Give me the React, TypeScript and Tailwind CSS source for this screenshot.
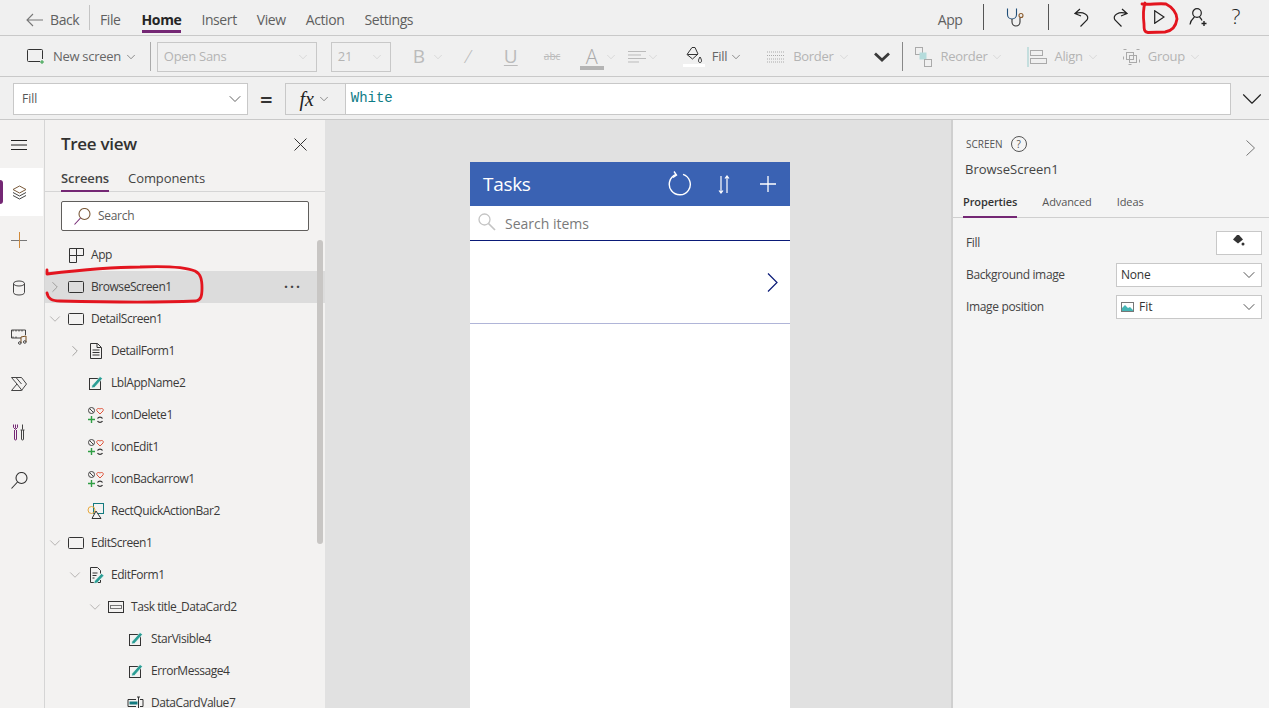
import { ReactNode } from 'react';
import { ChevronDown, ChevronRight } from 'lucide-react';

const font = "font-['Open_Sans','Liberation_Sans',sans-serif]";

const Chev = ({ className = 'text-[#666]', size = 14 }: { className?: string; size?: number }) => (
  <ChevronDown size={size} strokeWidth={1.1} className={className} />
);

const Svg = ({ w = 18, h = 18, children, className }: { w?: number; h?: number; children: ReactNode; className?: string }) => (
  <svg width={w} height={h} viewBox={`0 0 ${w} ${h}`} fill="none" stroke="#444" strokeWidth="1" className={className}>
    {children}
  </svg>
);

const Pencil = ({ x = 0, y = 0 }: { x?: number; y?: number }) => (
  <path transform={`translate(${x} ${y})`} d="M2 12 L10 3 L12.5 5 L4.5 14 L1.5 14.5 Z" fill="#2a9d94" stroke="#fff" strokeWidth="0.6" />
);

// magnifier with the handle on the lower left, as in the rail and the tree search
const Loupe = ({ handle = '#333', ring = '#333', className }: { handle?: string; ring?: string; className?: string }) => (
  <svg width="17" height="17" viewBox="0 0 17 17" fill="none" strokeWidth="1.100" className={className}>
    <circle cx="10.500" cy="6" r="5.500" stroke={ring} />
    <path d="M6.500 10 L0.500 16.500" stroke={handle} />
  </svg>
);

const treeIcons: Record<string, ReactNode> = {
  app: (
    <Svg>
      <path d="M2.500 2.500h14v7h-7v7h-7z M9.500 2.500v7 M2.500 9.500h7" stroke="#333" />
    </Svg>
  ),
  screen: (
    <Svg>
      <rect x="1.500" y="3.500" width="15" height="11" rx="1" stroke="#333" />
    </Svg>
  ),
  form: (
    <Svg>
      <path d="M3.500 1.500h7l4 4v11h-11z M5.500 8h7 M5.500 10.500h7 M5.500 13h7 M10 1.500v4h4" stroke="#333" />
    </Svg>
  ),
  label: (
    <Svg>
      <rect x="2.500" y="4.500" width="11" height="11" stroke="#333" />
      <Pencil x={3} y={-0.500} />
    </Svg>
  ),
  multi: (
    <Svg>
      <circle cx="4.500" cy="4.500" r="3" stroke="#444" />
      <path d="M2.500 2.500l4 4" stroke="#444" />
      <path d="M13 8 L10 5 C9 3.500 10.500 1.500 13 3 C15.500 1.500 17 3.500 16 5 Z" stroke="#e0533a" />
      <path d="M1 13.500h7 M4.500 10v7" stroke="#2f9e44" strokeWidth="1.400" />
      <path d="M10.500 12.500a3 3 0 0 1 5 0 M15.500 15a3 3 0 0 1-5 0" stroke="#333" strokeWidth="1.300" />
    </Svg>
  ),
  shapes: (
    <Svg>
      <rect x="6.500" y="1.500" width="10" height="10" stroke="#137a7f" />
      <circle cx="4.500" cy="8" r="3.500" stroke="#e7a83c" />
      <path d="M9 9 L14 16.500 H5 Z" fill="#f3f2f1" stroke="#333" />
    </Svg>
  ),
  edit: (
    <Svg>
      <path d="M3.500 1.500h7l3 3v3 M13.500 14v2.500h-10v-15 M5.500 7h5 M5.500 9.500h4 M5.500 12h2" stroke="#333" />
      <path d="M7.500 15 L14.500 7.500 L17 9.500 L10 17 L7 17.500 Z" fill="#2a9d94" stroke="#fff" strokeWidth="0.600" />
    </Svg>
  ),
  card: (
    <Svg>
      <rect x="1.500" y="3.500" width="15" height="11" stroke="#333" />
      <rect x="3.500" y="7.500" width="11" height="3" stroke="#777" />
    </Svg>
  ),
  input: (
    <Svg>
      <path d="M9 5.500h-8v7h8 M13 5.500h3v7h-3" stroke="#333" />
      <rect x="2.500" y="7.500" width="8" height="3" fill="#137a7f" stroke="none" />
      <path d="M10 3h3 M10 15h3 M11.500 3v12" stroke="#333" />
    </Svg>
  ),
};

type Row = { name: string; level: number; icon: string; arrow?: 'down' | 'right'; active?: boolean };

const rows: Row[] = [
  { name: 'App', level: 0, icon: 'app' },
  { name: 'BrowseScreen1', level: 0, icon: 'screen', arrow: 'right', active: true },
  { name: 'DetailScreen1', level: 0, icon: 'screen', arrow: 'down' },
  { name: 'DetailForm1', level: 1, icon: 'form', arrow: 'right' },
  { name: 'LblAppName2', level: 1, icon: 'label' },
  { name: 'IconDelete1', level: 1, icon: 'multi' },
  { name: 'IconEdit1', level: 1, icon: 'multi' },
  { name: 'IconBackarrow1', level: 1, icon: 'multi' },
  { name: 'RectQuickActionBar2', level: 1, icon: 'shapes' },
  { name: 'EditScreen1', level: 0, icon: 'screen', arrow: 'down' },
  { name: 'EditForm1', level: 1, icon: 'edit', arrow: 'down' },
  { name: 'Task title_DataCard2', level: 2, icon: 'card', arrow: 'down' },
  { name: 'StarVisible4', level: 3, icon: 'label' },
  { name: 'ErrorMessage4', level: 3, icon: 'label' },
  { name: 'DataCardValue7', level: 3, icon: 'input' },
];

const indent = ['pl-[3px]', 'pl-[23px]', 'pl-[43px]', 'pl-[63px]'];

const TreeRow = ({ row }: { row: Row }) => (
  <div className={`flex h-[32px] shrink-0 items-center ${indent[row.level]} ${row.active ? 'bg-[#dcdcdc]' : ''}`}>
    <span className="flex w-[14px] justify-center">
      {row.arrow === 'down' && <ChevronDown size={18} strokeWidth={1} className="shrink-0 text-[#a19f9d]" />}
      {row.arrow === 'right' && <ChevronRight size={18} strokeWidth={1} className="shrink-0 text-[#8a8886]" />}
    </span>
    <span className="flex w-[29px] pl-[5px]">{treeIcons[row.icon]}</span>
    <span className="text-[12px] leading-none tracking-[-0.45px] text-[#3b3a39]">{row.name}</span>
    {row.active && <span className="-mt-[9px] ml-auto mr-[23px] text-[14px] font-bold leading-none tracking-[2px] text-[#444]">...</span>}
  </div>
);

const railIcons: ReactNode[] = [
  <Svg key="data">
    <ellipse cx="9" cy="4.500" rx="5.500" ry="2.500" />
    <path d="M3.500 4.500v9c0 1.500 2.500 2.500 5.500 2.500s5.500-1 5.500-2.500v-9" />
  </Svg>,
  <Svg key="media">
    <path d="M11 11h-9.500v-8h14v5 M3 3v1.500 M6 3v1.500 M9 3v1.500 M12 3v1.500 M3 9.500v1.500 M6 9.500v1.500" />
    <path d="M11 16v-6l5-1v6" stroke="#7a4f1f" />
    <circle cx="9.800" cy="16" r="1.300" />
    <circle cx="14.800" cy="15" r="1.300" />
  </Svg>,
  <Svg key="flow">
    <path d="M1.500 2.500h10l5 6.500-5 6.500h-10l5.500-6.500z M7 9l5 6.500 M6 2.500l5.500 6.500" />
  </Svg>,
  <Svg key="tools">
    <path d="M5.500 1.500v4 M3.500 1.500v3l2 2 2-2v-3 M4.500 7v9a1 1 0 0 0 2 0v-9" stroke="#742774" />
    <path d="M12.500 1.500v5 M10.500 7h4 M11.500 7v9a1 1 0 0 0 2 0v-9" />
  </Svg>,
];

const SelectBox = ({ className, children }: { className: string; children: ReactNode }) => (
  <div className={`flex items-center justify-between border border-[#c8c8c8] ${className}`}>{children}</div>
);

const Ghost = ({ children, className = '' }: { children: ReactNode; className?: string }) => (
  <span className={`text-[13px] tracking-[-0.3px] text-[#b4b4b4] ${className}`}>{children}</span>
);

const TopBar = () => (
  <div className="flex h-[36px] shrink-0 items-center border-b border-[#c9c9c9] pl-[26px] pt-[4px] text-[14px] tracking-[-0.4px] text-[#5f5f5f]">
    <svg width="17" height="14" viewBox="0 0 17 14" fill="none" stroke="#777" strokeWidth="1.100">
      <path d="M7 1 L1 7 L7 13 M1 7 H17" />
    </svg>
    <span className="ml-[7px] w-[39px]">Back</span>
    <span className="-mt-[5px] h-[25px] w-px bg-[#c4c4c4]" />
    <span className="ml-[10px]">File</span>
    <span className="relative ml-[21px] flex h-full items-center font-bold text-[#252525]">
      Home
      <span className="absolute bottom-[2px] left-0 right-0 h-[3px] bg-[#742774]" />
    </span>
    <span className="ml-[20px]">Insert</span>
    <span className="ml-[20px]">View</span>
    <span className="ml-[20px]">Action</span>
    <span className="ml-[20px]">Settings</span>
    <span className="ml-auto">App</span>
    <span className="-mt-[5px] ml-[20px] h-[26px] w-px bg-[#555]" />
    <svg className="-mt-[5px] ml-[22px]" width="19" height="19" viewBox="0 0 19 19" fill="none" stroke="#1f4e79" strokeWidth="1.100">
      <path d="M1.500 0.500v6a4.500 4.500 0 0 0 9 0v-6" />
      <path d="M6 11v3a4 4 0 0 0 8 0v-4" stroke="#333" />
      <circle cx="15" cy="7.500" r="2" stroke="#8a5a2b" />
    </svg>
    <span className="-mt-[5px] ml-[23px] h-[26px] w-px bg-[#555]" />
    <svg className="-mt-[5px] ml-[25px]" width="15" height="19" viewBox="0 0 15 19" fill="none" stroke="#222" strokeWidth="1.200">
      <path d="M6 1 L1 5.500 L7 8 M1.500 5.500 C9 3 16 7 13 12 L6.500 18.500" />
    </svg>
    <svg className="-mt-[5px] ml-[24px]" width="15" height="19" viewBox="0 0 15 19" fill="none" stroke="#222" strokeWidth="1.200">
      <path d="M9 1 L14 5.500 L8 8 M13.500 5.500 C6 3 -1 7 2 12 L8.500 18.500" />
    </svg>
    <svg className="-mt-[5px] ml-[26px]" width="11" height="14" viewBox="0 0 11 14" fill="none" stroke="#222" strokeWidth="1.200">
      <path d="M0.700 0.700 L10 7 L0.700 13.300 Z" />
    </svg>
    <svg className="-mt-[5px] ml-[24px]" width="19" height="18" viewBox="0 0 19 18" fill="none" stroke="#222" strokeWidth="1.200">
      <circle cx="8" cy="5" r="4.300" />
      <path d="M1 16.500 C1.500 12 4 10.500 5.500 9 M10.500 9 C11.500 10 12.500 11 13 12.500" />
      <path d="M15 13v5 M12.500 15.500h5" strokeWidth="1.400" />
    </svg>
    <span className="-mt-[6px] ml-[24px] mr-[29px] text-[21px] font-light leading-none text-[#222]">?</span>
  </div>
);

const Ribbon = () => (
  <div className="flex h-[41px] shrink-0 items-center border-b border-[#c9c9c9] pl-[27px] pt-[1px] text-[13px]">
    <svg width="17" height="15" viewBox="0 0 17 15" fill="none" stroke="#333" strokeWidth="1">
      <path d="M13 12.500H1.500a1 1 0 0 1-1-1V1.500a1 1 0 0 1 1-1h13a1 1 0 0 1 1 1V10" />
      <path d="M15 11v4 M13 13h4" stroke="#2f9e44" />
    </svg>
    <span className="ml-[9px] whitespace-nowrap tracking-[-0.3px] text-[#666]">New screen</span>
    <Chev className="ml-[3px] text-[#555]" />
    <span className="ml-[12px] h-[29px] w-px bg-[#aaa]" />
    <SelectBox className="ml-[6px] h-[30px] w-[160px] px-[6px]">
      <Ghost className="text-[#aaa]">Open Sans</Ghost>
      <Chev className="text-[#ccc]" />
    </SelectBox>
    <SelectBox className="ml-[14px] h-[30px] w-[60px] px-[6px]">
      <Ghost className="text-[#aaa]">21</Ghost>
      <Chev className="text-[#ccc]" />
    </SelectBox>
    <span className="ml-[22px] w-[18px] text-[19px] text-[#bbb]">B</span>
    <Chev className="text-[#ccc]" />
    <span className="ml-[20px] w-[22px] text-[19px] font-light italic text-[#bbb]">/</span>
    <span className="ml-[17px] w-[16px] text-[19px] text-[#bbb] underline decoration-1 underline-offset-2">U</span>
    <span className="ml-[24px] w-[20px] text-[10px] text-[#bbb] line-through">abc</span>
    <span className="relative ml-[16px] w-[24px] text-center text-[20px] font-light text-[#aaa]">
      A
      <span className="absolute bottom-[2px] left-0 right-0 h-[4px] bg-[#b4b4b4]" />
    </span>
    <Chev className="text-[#ccc]" />
    <svg className="ml-[10px]" width="18" height="14" viewBox="0 0 18 14" stroke="#bbb" strokeWidth="1">
      <path d="M0 1.500h18 M0 5h13 M0 8.500h18 M0 12h11" />
    </svg>
    <Chev className="text-[#ccc]" />
    <span className="relative ml-[23px] h-[20px] w-[22px]">
      <svg className="ml-[3px]" width="17" height="17" viewBox="0 0 17 17" fill="none" stroke="#333" strokeWidth="1">
        <path d="M6 0.500 L9 0.500 L12 7 L6.500 12 L1 7.500 Z M1.500 7.500h10" />
        <path d="M14 10c-2 3-2 5.500 0 5.500s2-2.500 0-5.500z" />
      </svg>
      <span className="absolute bottom-0 left-0 h-[3px] w-[22px] bg-white" />
    </span>
    <span className="ml-[7px] tracking-[-0.3px] text-[#666]">Fill</span>
    <Chev className="ml-[2px] text-[#555]" />
    <svg className="ml-[24px]" width="18" height="12" viewBox="0 0 18 12" stroke="#aaa" strokeWidth="1" strokeDasharray="1 1">
      <path d="M0 1h18 M0 4.500h18 M0 8h18 M0 11h18" />
    </svg>
    <Ghost className="ml-[8px]">Border</Ghost>
    <Chev className="ml-[3px] text-[#ccc]" />
    <svg className="ml-[23px]" width="16" height="10" viewBox="0 0 16 10" fill="none" stroke="#3a3a3a" strokeWidth="2.800">
      <path d="M1 1.500 L8 8 L15 1.500" />
    </svg>
    <span className="ml-[12px] h-[29px] w-px bg-[#888]" />
    <svg className="ml-[12px]" width="17" height="20" viewBox="0 0 17 20" fill="none" stroke="#aaa" strokeWidth="1">
      <rect x="0.500" y="0.500" width="7" height="7" />
      <rect x="4.500" y="5.500" width="7" height="7" fill="#b5dcdc" stroke="none" />
      <rect x="9.500" y="12.500" width="7" height="7" />
    </svg>
    <Ghost className="ml-[9px]">Reorder</Ghost>
    <Chev className="ml-[3px] text-[#ccc]" />
    <svg className="ml-[23px]" width="20" height="20" viewBox="0 0 20 20" fill="none" stroke="#aaa" strokeWidth="1">
      <path d="M1 0v20" stroke="#9cc" />
      <rect x="3.500" y="3.500" width="12" height="5" />
      <rect x="3.500" y="11.500" width="16" height="5" />
    </svg>
    <Ghost className="ml-[7px]">Align</Ghost>
    <Chev className="ml-[3px] text-[#ccc]" />
    <svg className="ml-[22px]" width="19" height="20" viewBox="0 0 19 20" fill="none" stroke="#aaa" strokeWidth="1">
      <rect x="1.500" y="2.500" width="16" height="15" strokeDasharray="3 10" />
      <rect x="4.500" y="5.500" width="7" height="7" />
      <rect x="7.500" y="8.500" width="7" height="7" />
    </svg>
    <Ghost className="ml-[7px]">Group</Ghost>
    <Chev className="ml-[3px] text-[#ccc]" />
  </div>
);

const FormulaBar = () => (
  <div className="flex h-[43px] shrink-0 items-center border-b border-[#c9c9c9] pl-[13px] pt-[1px]">
    <SelectBox className="h-[32px] w-[235px] bg-white pl-[8px] pr-[2px]">
      <span className="text-[12px] text-[#555]">Fill</span>
      <ChevronDown size={20} strokeWidth={1} className="text-[#444]" />
    </SelectBox>
    <span className="flex w-[37px] justify-center text-[22px] font-semibold leading-none text-[#333]">=</span>
    <div className="flex h-[32px] w-[61px] items-center justify-center gap-[3px] border border-[#c8c8c8]">
      <span className="font-['Liberation_Serif',serif] text-[20px] italic leading-none text-[#222]">fx</span>
      <Chev className="text-[#555]" />
    </div>
    <div className="flex h-[32px] w-[886px] items-center border border-l-0 border-[#c8c8c8] bg-white pl-[5px] font-['Liberation_Mono',monospace] text-[14px] text-[#0e7c86]">
      White
    </div>
    <ChevronDown size={34} strokeWidth={0.800} className="ml-[4px] text-[#222]" />
  </div>
);

const Rail = () => (
  <div className="flex w-[45px] shrink-0 flex-col items-center border-r border-[#d5d5d5] bg-[#f3f2f1] pr-[6px]">
    <svg className="mt-[20px]" width="16" height="10" viewBox="0 0 16 10" stroke="#222" strokeWidth="1">
      <path d="M0 0.500h16 M0 5h16 M0 9.500h16" />
    </svg>
    <div className="relative mt-[18px] flex h-[48px] w-[43px] shrink-0 items-center justify-center self-start bg-white pr-[5px]">
      <span className="absolute left-0 top-[12px] h-[24px] w-[3px] rounded-r bg-[#742774]" />
      <svg width="15" height="15" viewBox="0 0 15 15" fill="none" stroke="#444" strokeWidth="1">
        <path d="M7.500 1 L14 4.500 L7.500 8 L1 4.500 Z" stroke="#7a5a3a" />
        <path d="M1 7.500 L7.500 11 L14 7.500 M1 10.500 L7.500 14 L14 10.500" />
      </svg>
    </div>
    <svg className="mt-[16px]" width="16" height="16" viewBox="0 0 16 16" fill="none" strokeWidth="1">
      <path d="M0 8.500h16" stroke="#777" />
      <path d="M8.500 0v16" stroke="#d08a3a" />
    </svg>
    <div className="mt-[31px] flex flex-col items-center gap-[30px]">{railIcons}</div>
    <Loupe className="mt-[31px]" />
  </div>
);

const TreePanel = () => (
  <div className="relative flex w-[280px] shrink-0 flex-col overflow-hidden bg-[#f3f2f1]">
    <div className="flex h-[52px] shrink-0 items-center justify-between pb-[4px] pl-[16px] pr-[18px]">
      <span className="text-[17px] font-semibold tracking-[-0.3px] text-[#323130]">Tree view</span>
      <svg width="13" height="13" viewBox="0 0 13 13" stroke="#333" strokeWidth="1">
        <path d="M0.500 0.500 L12.500 12.500 M12.500 0.500 L0.500 12.500" />
      </svg>
    </div>
    <div className="flex h-[20px] shrink-0 gap-[19px] border-b border-[#d5d5d5] pl-[16px] text-[13px] leading-none tracking-[-0.1px] text-[#444]">
      <span className="relative h-[20px] font-semibold">
        Screens
        <span className="absolute bottom-0 left-0 right-0 h-[2px] bg-[#742774]" />
      </span>
      <span>Components</span>
    </div>
    <div className="ml-[16px] mt-[9px] flex h-[30px] w-[248px] shrink-0 items-center rounded-[2px] border border-[#605e5c] bg-white pl-[12px]">
      <Loupe handle="#742774" ring="#7a5a3a" />
      <span className="ml-[7px] text-[12px] tracking-[-0.3px] text-[#605e5c]">Search</span>
    </div>
    <div className="mt-[8px] flex flex-col">
      {rows.map(row => (
        <TreeRow key={row.name} row={row} />
      ))}
    </div>
    <span className="absolute left-[272px] top-[120px] h-[304px] w-[6px] rounded-full bg-[#c8c6c4]" />
  </div>
);

const Phone = () => (
  <div className="ml-[145px] mt-[42px] flex h-[560px] w-[320px] flex-col bg-white">
    <div className="flex h-[44px] shrink-0 items-center bg-[#3a62b3] pl-[13px] text-white">
      <span className="text-[19px] tracking-[-0.3px]">Tasks</span>
      <svg className="ml-auto" width="24" height="26" viewBox="0 0 24 26" fill="none" stroke="#fff" strokeWidth="1.400">
        <path d="M8 3.500 A10.500 10.500 0 1 0 15 3.300" />
        <path d="M6 0.500 L8.500 4 L5 6.500" />
      </svg>
      <svg className="ml-[26px]" width="12" height="19" viewBox="0 0 12 19" fill="none" stroke="#fff" strokeWidth="1.200">
        <path d="M3 1v17 M1 15.500 L3 18 L5 15.500 M9 18V1 M7 3.500 L9 1 L11 3.500" />
      </svg>
      <svg className="ml-[30px] mr-[14px]" width="16" height="16" viewBox="0 0 16 16" stroke="#fff" strokeWidth="1.300">
        <path d="M0 8h16 M8 0v16" />
      </svg>
    </div>
    <div className="flex h-[35px] shrink-0 items-center border-b border-[#0a1a78] pl-[8px]">
      <svg className="-mt-[3px]" width="18" height="18" viewBox="0 0 18 18" fill="none" stroke="#c4c4c4" strokeWidth="1.300">
        <circle cx="6.500" cy="6.500" r="5.500" />
        <path d="M10.500 10.500 L17 17" strokeWidth="1.700" />
      </svg>
      <span className="ml-[9px] text-[14px] text-[#7a7a7a]">Search items</span>
    </div>
    <div className="flex h-[83px] shrink-0 items-center justify-end border-b border-[#b0b5d8] pr-[12px]">
      <svg width="11" height="19" viewBox="0 0 11 19" fill="none" stroke="#0a1a78" strokeWidth="1.200">
        <path d="M1 0.500 L10 9.500 L1 18.500" />
      </svg>
    </div>
  </div>
);

const PropRow = ({ label, children }: { label: string; children: ReactNode }) => (
  <div className="flex h-[32px] items-center justify-between">
    <span className="text-[12px] tracking-[-0.35px] text-[#444]">{label}</span>
    {children}
  </div>
);

const PropPanel = () => (
  <div className="w-[318px] shrink-0 border-l-[2px] border-[#cfcfcf] bg-[#f4f4f4]">
    <div className="relative mt-[16px] flex h-[16px] items-center pl-[13px]">
      <span className="text-[10px] text-[#555]">SCREEN</span>
      <span className="ml-[8px] flex h-[16px] w-[16px] items-center justify-center rounded-full border border-[#555] text-[10px] leading-none text-[#555]">?</span>
      <svg className="absolute right-[14px] top-[4px]" width="9" height="16" viewBox="0 0 9 16" fill="none" stroke="#777" strokeWidth="1">
        <path d="M0.500 0.500 L8.500 8 L0.500 15.500" />
      </svg>
    </div>
    <div className="mt-[8px] pl-[12px] text-[13px] text-[#444]">BrowseScreen1</div>
    <div className="mt-[14px] flex h-[24px] gap-[25px] border-b border-[#cfcfcf] pl-[10px] text-[11px] tracking-[-0.1px] text-[#555]">
      <span className="relative h-[24px] font-semibold text-[#333]">
        Properties
        <span className="absolute bottom-0 left-0 right-0 h-[2px] bg-[#742774]" />
      </span>
      <span>Advanced</span>
      <span>Ideas</span>
    </div>
    <div className="mt-[9px] flex flex-col pl-[13px] pr-[7px]">
      <PropRow label="Fill">
        <div className="flex h-[24px] w-[46px] items-start justify-center border border-[#c8c8c8] bg-white pt-[3px]">
          <svg width="12" height="12" viewBox="0 0 12 12" fill="#333">
            <path d="M4 0 L6 0 L10 4.500 L5 8.500 L0 4.500 Z" />
            <circle cx="10" cy="9" r="1.500" />
          </svg>
        </div>
      </PropRow>
      <PropRow label="Background image">
        <SelectBox className="h-[24px] w-[146px] bg-white pl-[4px] pr-[2px]">
          <span className="text-[12px] tracking-[-0.2px] text-[#333]">None</span>
          <ChevronDown size={20} strokeWidth={1} className="text-[#333]" />
        </SelectBox>
      </PropRow>
      <PropRow label="Image position">
        <SelectBox className="h-[24px] w-[146px] bg-white pl-[4px] pr-[2px]">
          <span className="flex items-center gap-[5px] text-[12px] text-[#333]">
            <svg width="13" height="10" viewBox="0 0 13 10" fill="none">
              <rect x="0.500" y="0.500" width="12" height="9" stroke="#777" />
              <path d="M1 9 L1 6 L4 3 L7 6 L9 5 L12 8 L12 9 Z" fill="#45b5b5" />
            </svg>
            Fit
          </span>
          <ChevronDown size={20} strokeWidth={1} className="text-[#333]" />
        </SelectBox>
      </PropRow>
    </div>
  </div>
);

const App = () => (
  <div className={`relative flex h-[708px] w-[1269px] flex-col overflow-hidden bg-[#f0f0f0] ${font}`}>
    <TopBar />
    <Ribbon />
    <FormulaBar />
    <div className="flex min-h-0 flex-1">
      <Rail />
      <TreePanel />
      <div className="w-[626px] shrink-0 overflow-hidden bg-[#e1e1e1]">
        <Phone />
      </div>
      <PropPanel />
    </div>
    {/* red marker scribbles drawn on top of the screenshot */}
    <svg className="pointer-events-none absolute left-0 top-0" width="1269" height="708" fill="none" stroke="#e3151f" strokeWidth="2.800" strokeLinecap="round" strokeLinejoin="round">
      <path d="M47 270 L47 274 C80 270 110 267 140 267 C165 266 185 267 195 271 C201 274 202 280 202 288 C202 296 201 300 196 301 C150 303 100 302 60 301 C52 301 48 299 47 293" />
      <path d="M1142 4 C1150 5 1158 3 1166 4 C1172 7 1177 13 1177 19 C1176 26 1172 31 1165 32 L1148 32.500 C1144 32 1144 29 1144 24 C1143 15 1143 9 1145 3" />
    </svg>
  </div>
);

export default App;
